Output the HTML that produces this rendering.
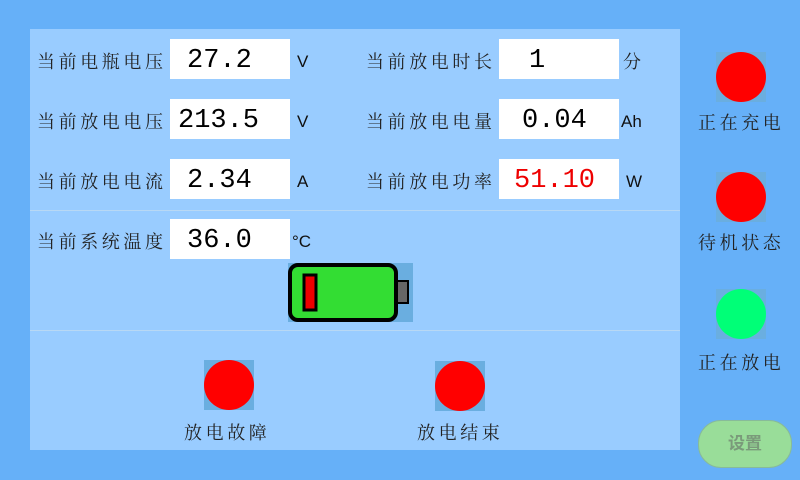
<!DOCTYPE html>
<html><head><meta charset="utf-8"><style>
body{margin:0;width:800px;height:480px;background:#66b0f8;position:relative;overflow:hidden;font-family:"Liberation Sans","Noto Sans CJK SC",sans-serif;}
.panel{position:absolute;left:30px;top:29px;width:650px;height:421px;background:#99ccff;}
.line{position:absolute;left:30px;width:650px;height:1px;background:#b8d8f4;}
.lab{position:absolute;font-size:18px;color:#222;letter-spacing:3.6px;font-family:"Noto Serif CJK SC","Noto Sans CJK SC",serif;line-height:24px;}
.box{position:absolute;width:120px;height:40px;background:#fff;font-family:"Liberation Mono",monospace;font-size:27px;line-height:44px;color:#000;}
.u{position:absolute;font-size:17px;color:#111;line-height:24px;}
.dot{position:absolute;width:50px;height:50px;background:#6aaee0;}
.dot div{width:50px;height:50px;border-radius:50%;background:#ff0000;}
</style></head><body>
<div class="panel"></div>
<div class="line" style="top:210px"></div>
<div class="line" style="top:330px"></div>

<div class="lab" style="left:37px;top:49px">当前电瓶电压</div>
<div class="box" style="left:170px;top:39px;padding-left:17px;width:103px">27.2</div>
<div class="u" style="left:297px;top:50px">V</div>
<div class="lab" style="left:37px;top:109px">当前放电电压</div>
<div class="box" style="left:170px;top:99px;padding-left:8px;width:112px">213.5</div>
<div class="u" style="left:297px;top:110px">V</div>
<div class="lab" style="left:37px;top:169px">当前放电电流</div>
<div class="box" style="left:170px;top:159px;padding-left:17px;width:103px">2.34</div>
<div class="u" style="left:297px;top:170px">A</div>
<div class="lab" style="left:37px;top:229px">当前系统温度</div>
<div class="box" style="left:170px;top:219px;padding-left:17px;width:103px">36.0</div>
<div class="u" style="left:292px;top:230px">°C</div>

<div class="lab" style="left:366px;top:49px">当前放电时长</div>
<div class="box" style="left:499px;top:39px;padding-left:30px;width:90px">1</div>
<div class="lab" style="left:623px;top:49px">分</div>
<div class="lab" style="left:366px;top:109px">当前放电电量</div>
<div class="box" style="left:499px;top:99px;padding-left:23px;width:97px">0.04</div>
<div class="u" style="left:621px;top:110px">Ah</div>
<div class="lab" style="left:366px;top:169px">当前放电功率</div>
<div class="box" style="left:499px;top:159px;padding-left:15px;width:105px;color:#ee0000">51.10</div>
<div class="u" style="left:626px;top:170px">W</div>

<svg style="position:absolute;left:288px;top:263px" width="125" height="60">
<rect x="0" y="0" width="125" height="59" fill="#6aaee0"/>
<rect x="2" y="2" width="106" height="55" rx="8" fill="#33dd33" stroke="#000" stroke-width="4"/>
<rect x="109" y="18" width="11" height="22" fill="#666" stroke="#000" stroke-width="2"/>
<rect x="16" y="12" width="12" height="35" fill="#ee0000" stroke="#000" stroke-width="3"/>
</svg>

<div class="dot" style="left:204px;top:360px"><div></div></div>
<div class="lab" style="left:184px;top:420px">放电故障</div>
<div class="dot" style="left:435px;top:361px"><div></div></div>
<div class="lab" style="left:417px;top:420px">放电结束</div>

<div class="dot" style="left:716px;top:52px"><div></div></div>
<div class="lab" style="left:698px;top:110px">正在充电</div>
<div class="dot" style="left:716px;top:172px"><div></div></div>
<div class="lab" style="left:698px;top:230px">待机状态</div>
<div class="dot" style="left:716px;top:289px"><div style="background:#00ff77"></div></div>
<div class="lab" style="left:698px;top:350px">正在放电</div>

<div style="position:absolute;left:698px;top:420px;width:92px;height:46px;border-radius:23px;background:#99dd99;border:1px solid #88bb99;color:#7a9a7a;font-size:17px;line-height:46px;text-align:center;font-weight:bold;">设置</div>
</body></html>
